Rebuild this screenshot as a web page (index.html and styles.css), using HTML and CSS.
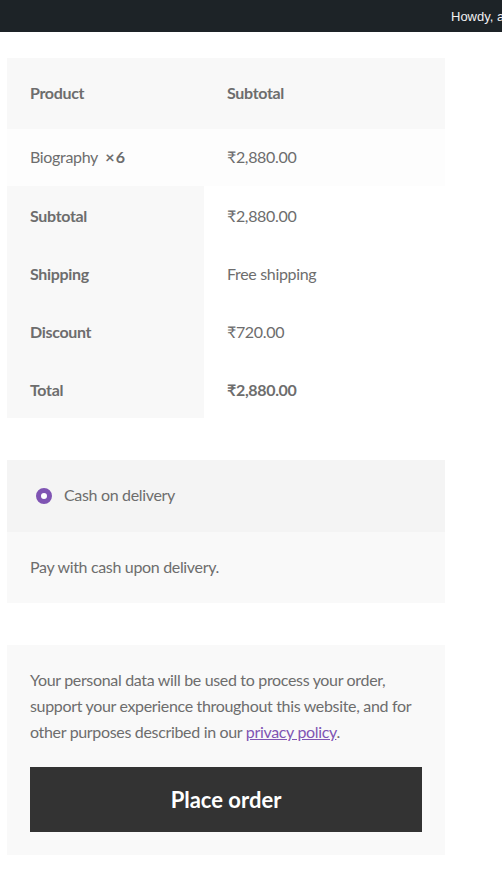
FILE: index.html
```html
<!DOCTYPE html>
<html lang="en">
<head>
<meta charset="utf-8">
<title>Checkout</title>
<link rel="stylesheet" href="styles.css">
</head>
<body>
<div class="adminbar"><span class="howdy">Howdy, admin</span></div>
<main class="content">
  <table class="order">
    <thead>
      <tr class="head"><th>Product</th><th>Subtotal</th></tr>
    </thead>
    <tbody>
      <tr class="item"><td>Biography&nbsp; <strong>×&thinsp;6</strong></td><td>₹2,880.00</td></tr>
    </tbody>
    <tfoot>
      <tr><th>Subtotal</th><td>₹2,880.00</td></tr>
      <tr><th>Shipping</th><td>Free shipping</td></tr>
      <tr><th>Discount</th><td>₹720.00</td></tr>
      <tr><th>Total</th><td><strong>₹2,880.00</strong></td></tr>
    </tfoot>
  </table>

  <section class="payment">
    <div class="method"><span class="radio"></span><span class="label">Cash on delivery</span></div>
    <div class="desc">Pay with cash upon delivery.</div>
  </section>

  <section class="place">
    <p class="privacy">Your personal data will be used to process your order, support your experience throughout this website, and for other purposes described in our <a href="#">privacy policy</a>.</p>
    <button class="btn" type="button">Place order</button>
  </section>
</main>
</body>
</html>
```

FILE: styles.css
```css
html, body { margin: 0; padding: 0; background: #fff; }
body {
  font-family: "Lato", "Open Sans", sans-serif;
  font-size: 16px;
  letter-spacing: -0.33px;
  color: #6d6d6d;
  overflow: hidden;
}
.adminbar {
  height: 32px;
  background: #1d2327;
  display: flex;
  align-items: center;
  padding-left: 451px;
  box-sizing: border-box;
  white-space: nowrap;
  overflow: hidden;
}
.howdy {
  font-family: "Liberation Sans", Arial, sans-serif;
  font-size: 13px;
  letter-spacing: 0;
  color: #f0f0f1;
}
.content {
  margin: 26px 0 0 7px;
  width: 438px;
}
.order {
  width: 438px;
  border-collapse: collapse;
  table-layout: fixed;
}
.order th, .order td {
  text-align: left;
  padding: 0 0 0 23px;
  line-height: 24px;
  vertical-align: middle;
}
.order th { font-weight: 700; }
.order th:first-child, .order td:first-child { width: 174px; }
.order .head { height: 71px; background: #f8f8f8; }
.order .head th { padding-bottom: 1px; }
.order .item { height: 57px; background: #fdfdfd; }
.order .item td { padding-bottom: 1px; }
.order tfoot tr { height: 58px; }
.order tfoot th { background: #f8f8f8; padding-top: 1px; }
.order tfoot td { background: #fff; padding-top: 1px; }
.order strong { font-weight: 700; }

.payment { margin-top: 42px; }
.method {
  height: 72px;
  background: #f4f4f4;
  display: flex;
  align-items: center;
  padding-left: 29px;
  gap: 12px;
}
.label { margin-bottom: 3px; }
.radio {
  width: 16px;
  height: 16px;
  box-sizing: border-box;
  border-radius: 50%;
  border: 5.5px solid #7f54b3;
  background: #fff;
}
.desc {
  height: 71px;
  box-sizing: border-box;
  background: #f9f9f9;
  display: flex;
  align-items: center;
  padding: 0 0 3px 23px;
}

.place {
  margin-top: 42px;
  background: #f9f9f9;
  padding: 22px 23px 23px;
}
.privacy {
  margin: 0;
  line-height: 26px;
}
.privacy a { color: #7f54b3; text-decoration: underline; }
.btn {
  display: block;
  margin-top: 22px;
  width: 100%;
  height: 65px;
  border: 0;
  background: #333;
  color: #fff;
  font-family: inherit;
  font-size: 22px;
  font-weight: 700;
  letter-spacing: 0;
}
```
